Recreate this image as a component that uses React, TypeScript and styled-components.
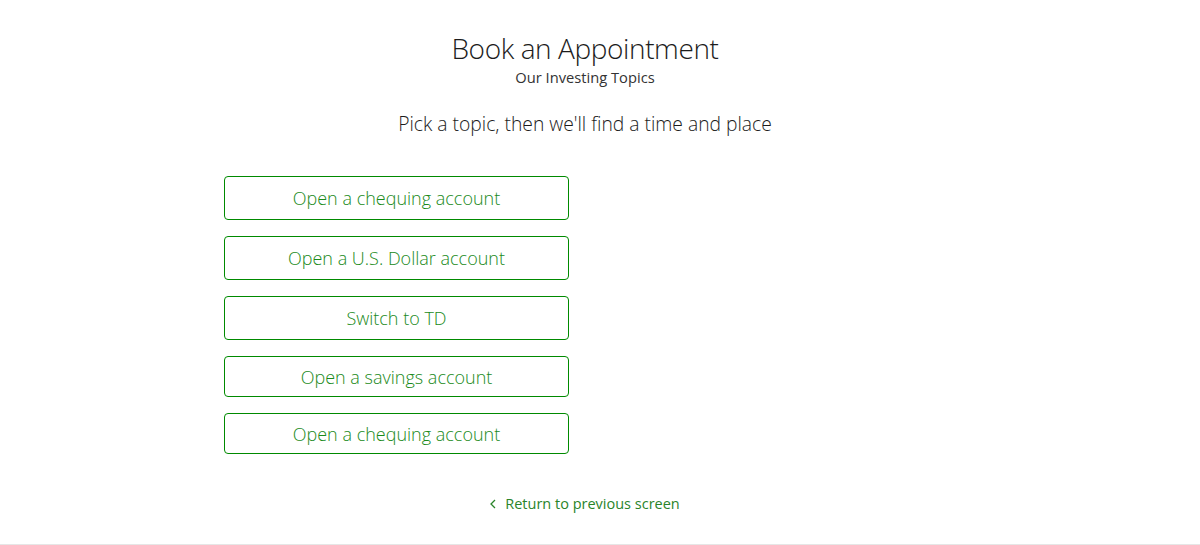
import React from "react";
import styled, { createGlobalStyle } from "styled-components";

const GlobalStyle = createGlobalStyle`
  html, body {
    margin: 0;
    padding: 0;
    background: #ffffff;
    font-family: "Open Sans", "Noto Sans", sans-serif;
  }
`;

const Page = styled.div`
  width: 1200px;
  height: 545px;
  box-sizing: border-box;
  border-bottom: 1px solid #e6e6e6;
  overflow: hidden;
`;

const Column = styled.main`
  width: 1170px;
  display: flex;
  flex-direction: column;
  align-items: center;
  padding-top: 30px;
`;

const Title = styled.h1`
  margin: 0;
  font-weight: 300;
  font-size: 28px;
  letter-spacing: -0.4px;
  line-height: 36px;
  color: #1c1c1c;
`;

const Subtitle = styled.p`
  margin: 1px 0 0;
  font-weight: 400;
  font-size: 14.7px;
  line-height: 20px;
  color: #333333;
`;

const Lead = styled.p`
  margin: 23px 0 0;
  font-weight: 300;
  font-size: 19.3px;
  line-height: 28px;
  color: #1c1c1c;
`;

const TopicList = styled.div`
  align-self: stretch;
  display: flex;
  flex-direction: column;
  gap: 16px;
  padding-left: 224px;
  margin-top: 38px;
`;

const TopicButton = styled.button<{ $h: number }>`
  width: 345px;
  height: ${(p) => p.$h}px;
  box-sizing: border-box;
  border: 1px solid #008a00;
  border-radius: 4px;
  background: #fff;
  color: #1a8a1a;
  font-family: "Open Sans", "Noto Sans", sans-serif;
  font-weight: 300;
  font-size: 18px;
  cursor: pointer;
  padding: 0;
`;

const BackLink = styled.a`
  margin-top: 40px;
  display: flex;
  align-items: center;
  gap: 9px;
  color: #2a842a;
  font-size: 14.5px;
  font-weight: 400;
  text-decoration: none;
`;

const topics: { label: string; h: number }[] = [
  { label: "Open a chequing account", h: 44 },
  { label: "Open a U.S. Dollar account", h: 44 },
  { label: "Switch to TD", h: 44 },
  { label: "Open a savings account", h: 41 },
  { label: "Open a chequing account", h: 41 },
];

export default function App() {
  return (
    <Page>
      <GlobalStyle />
      <Column>
        <Title>Book an Appointment</Title>
        <Subtitle>Our Investing Topics</Subtitle>
        <Lead>Pick a topic, then we'll find a time and place</Lead>
        <TopicList>
          {topics.map((t, i) => (
            <TopicButton key={i} $h={t.h}>
              {t.label}
            </TopicButton>
          ))}
        </TopicList>
        <BackLink href="#">
          <svg width="6" height="10" viewBox="0 0 6 10">
            <path d="M5 1 L1 5 L5 9" fill="none" stroke="#2a842a" strokeWidth="1.3" />
          </svg>
          Return to previous screen
        </BackLink>
      </Column>
    </Page>
  );
}
